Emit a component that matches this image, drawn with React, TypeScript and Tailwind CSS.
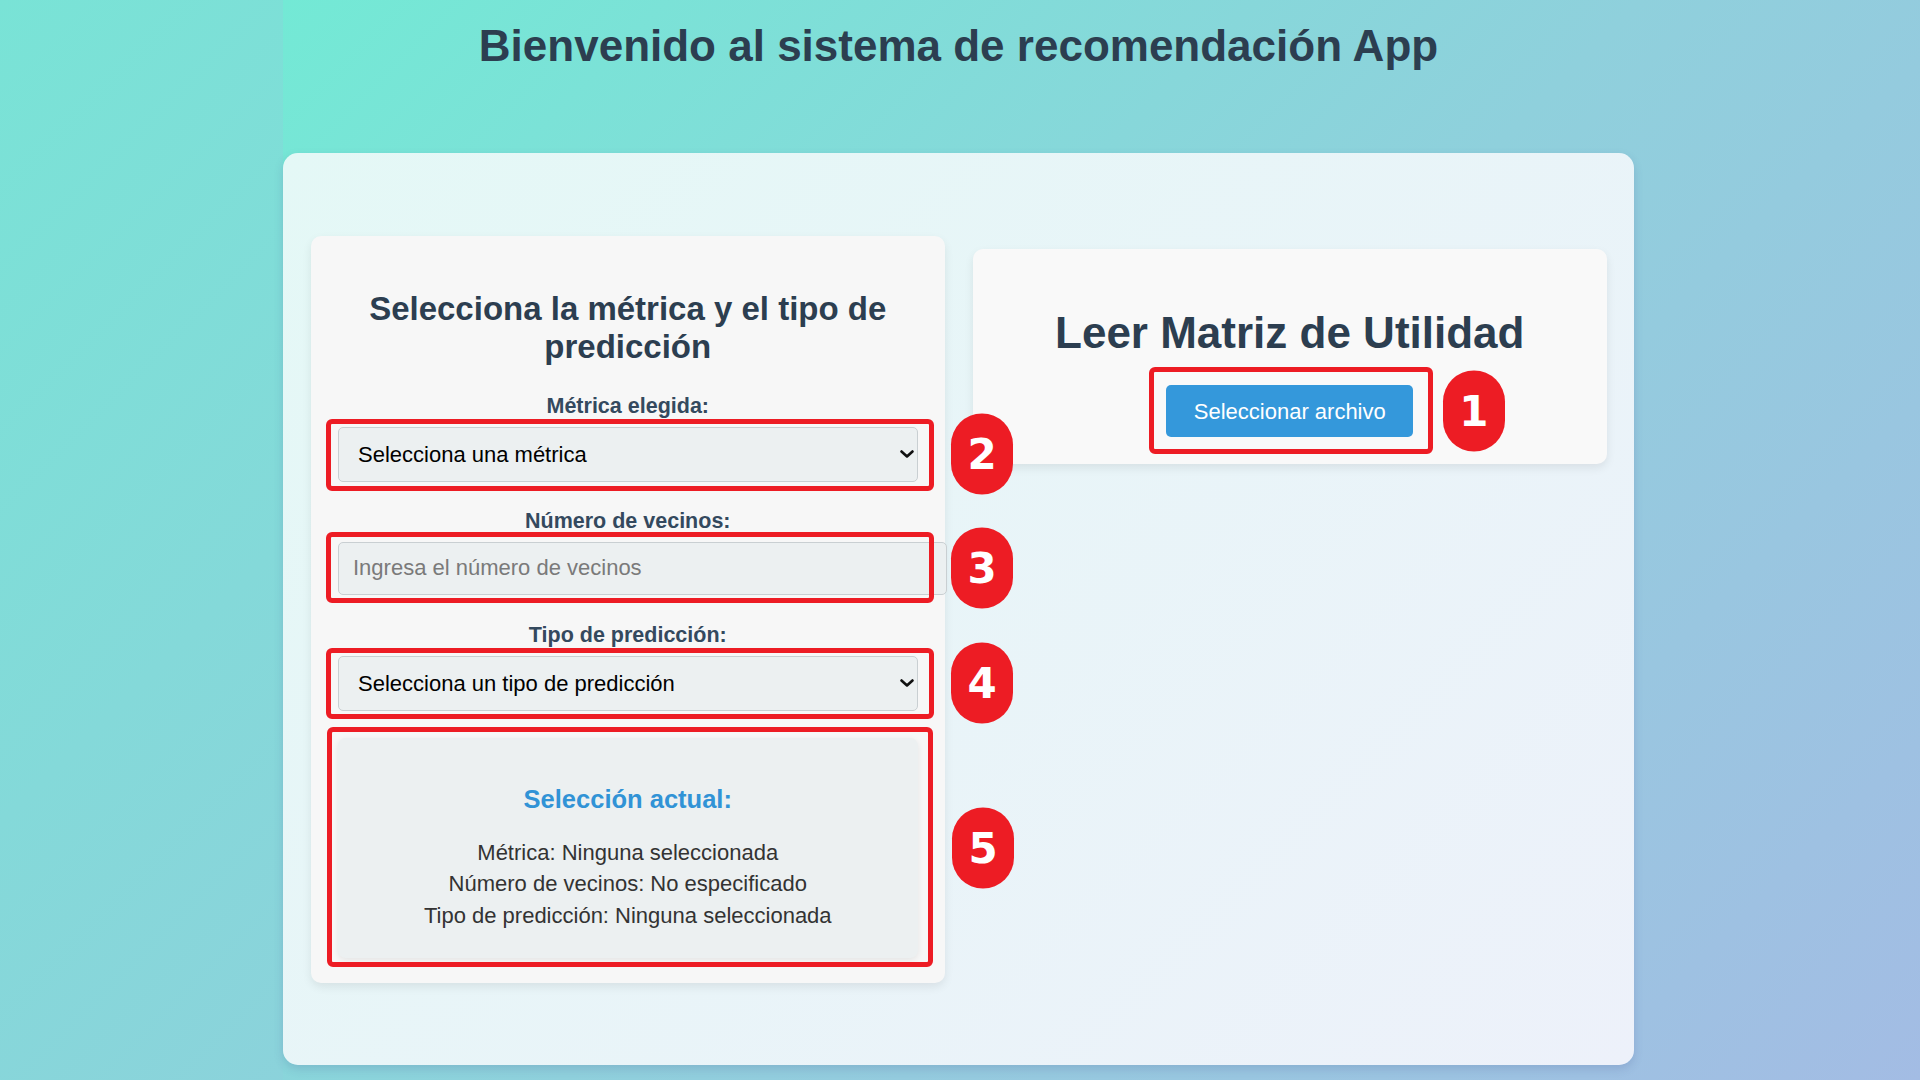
import { useState } from 'react';

// marco rojo + número de la anotación
function Marca({ n, box, badge }: { n: number; box: string; badge: string }) {
  return (
    <>
      <div className={`absolute border-[5px] border-[#ed1c24] rounded-[6px] pointer-events-none ${box}`} />
      <div className={`absolute top-1/2 -translate-y-1/2 w-[62px] h-[81px] rounded-full bg-[#ed1c24] flex items-center justify-center text-white text-[42px] font-bold font-['DejaVu_Sans',sans-serif] ${badge}`}>
        {n}
      </div>
    </>
  );
}

function Chevron() {
  return (
    <svg className="absolute right-[4px] top-1/2 -translate-y-1/2 pointer-events-none" width="14" height="8" viewBox="0 0 14 8">
      <path d="M1.5 1.5 L7 6.5 L12.5 1.5" fill="none" stroke="#111" strokeWidth="2.6" strokeLinecap="round" strokeLinejoin="round" />
    </svg>
  );
}

export default function App() {
  const [metrica, setMetrica] = useState('');
  const [vecinos, setVecinos] = useState('');
  const [tipo, setTipo] = useState('');

  const label = "block text-center text-[21.5px] leading-[24px] font-bold text-[#34495e]";
  const campo = "bg-[#ecf0f1] border border-[#c9cfd2] rounded-[5px] text-[22px] font-['Liberation_Sans',Arial,sans-serif]";

  return (
    <div className="w-full h-[1080px] overflow-hidden bg-[linear-gradient(135deg,#79e3d6_0%,#8fcfdc_55%,#a3bbe4_100%)] font-['Liberation_Sans',Arial,sans-serif]">
      <div className="ml-[283px] h-full bg-[linear-gradient(135deg,#73e9d5_0%,#8fd0dc_50%,#a3bce4_100%)]">
        <header className="w-[1351px] h-[153px] pt-[20px]">
          <h1 className="text-center text-[44px] leading-[51px] font-bold text-[#2c3e50]">
            Bienvenido al sistema de recomendación App
          </h1>
        </header>

        <main className="w-[1351px] h-[912px] rounded-[15px] bg-[linear-gradient(135deg,#e4f8f6,#edf1fa)] shadow-[0_4px_10px_rgba(60,70,140,0.18)] flex items-start gap-[28px] px-[27.5px]">
          {/* panel izquierdo */}
          <section className="mt-[83px] w-[634.5px] bg-[#f7f7f7] rounded-[10px] shadow-[0_4px_10px_rgba(0,0,0,0.08)] px-[27.5px] pt-[27.5px] pb-[25.3px] flex flex-col">
            <h2 className="mt-[26px] text-center text-[33px] leading-[38px] font-bold text-[#2c3e50]">
              Selecciona la métrica y el tipo de predicción
            </h2>

            <div className="mt-[28.5px] flex flex-col gap-[8.7px]">
              <label className={label}>Métrica elegida:</label>
              <div className="relative">
                <select
                  value={metrica}
                  onChange={(e) => setMetrica(e.target.value)}
                  className={`${campo} appearance-none w-full h-[55px] pl-[19px] text-black`}
                >
                  <option value="">Selecciona una métrica</option>
                  <option value="pearson">Correlación de Pearson</option>
                  <option value="coseno">Distancia coseno</option>
                  <option value="euclidea">Distancia euclídea</option>
                </select>
                <Chevron />
                <Marca n={2} box="-left-[12px] -right-[16.5px] -top-[7.4px] -bottom-[9px]" badge="left-[613px]" />
              </div>
            </div>

            <div className="mt-[27.3px] flex flex-col gap-[8.7px]">
              <label className={label}>Número de vecinos:</label>
              <div className="relative">
                <input
                  type="number"
                  value={vecinos}
                  onChange={(e) => setVecinos(e.target.value)}
                  placeholder="Ingresa el número de vecinos"
                  className={`${campo} block w-[609px] h-[53.3px] px-[14px] placeholder-[#7a7a7a]`}
                />
                <Marca n={3} box="-left-[12px] -right-[16.5px] -top-[10px] -bottom-[8.3px]" badge="left-[613px]" />
              </div>
            </div>

            <div className="mt-[28.4px] flex flex-col gap-[8.6px]">
              <label className={label}>Tipo de predicción:</label>
              <div className="relative">
                <select
                  value={tipo}
                  onChange={(e) => setTipo(e.target.value)}
                  className={`${campo} appearance-none w-full h-[54.7px] pl-[19px] text-black`}
                >
                  <option value="">Selecciona un tipo de predicción</option>
                  <option value="simple">Predicción simple</option>
                  <option value="media">Diferencia con la media</option>
                </select>
                <Chevron />
                <Marca n={4} box="-left-[12px] -right-[16.5px] -top-[8.3px] -bottom-[8.6px]" badge="left-[613px]" />
              </div>
            </div>

            <div className="relative mt-[27.3px]">
              <div className="h-[220px] bg-[#ecf0f1] rounded-[8px] shadow-[0_2px_6px_rgba(0,0,0,0.08)] pt-[47.3px] text-center">
                <h3 className="text-[25.5px] leading-[29px] font-bold text-[#3193d6]">Selección actual:</h3>
                <div className="mt-[22.3px] text-[22px] leading-[31.5px] text-[#333]">
                  <p>Métrica: {metrica || 'Ninguna seleccionada'}</p>
                  <p>Número de vecinos: {vecinos || 'No especificado'}</p>
                  <p>Tipo de predicción: {tipo || 'Ninguna seleccionada'}</p>
                </div>
              </div>
              <Marca n={5} box="-left-[11px] -right-[15px] -top-[11.3px] -bottom-[8.7px]" badge="left-[614px]" />
            </div>
          </section>

          {/* panel derecho */}
          <section className="mt-[96.3px] w-[634.5px] bg-[#f9f9f9] rounded-[10px] shadow-[0_4px_10px_rgba(0,0,0,0.08)] pt-[57.3px] pb-[26.7px] flex flex-col items-center">
            <h2 className="text-[44px] leading-[51px] font-bold text-[#2c3e50]">Leer Matriz de Utilidad</h2>
            <div className="relative mt-[27.4px]">
              <button className="h-[52.3px] px-[27.5px] bg-[#3498db] rounded-[5px] text-white text-[22px] font-['Liberation_Sans',Arial,sans-serif]">
                Seleccionar archivo
              </button>
              <Marca n={1} box="-left-[17.4px] -right-[20px] -top-[18.3px] -bottom-[16.7px]" badge="left-[276.6px] w-[61px]" />
            </div>
          </section>
        </main>
      </div>
    </div>
  );
}
